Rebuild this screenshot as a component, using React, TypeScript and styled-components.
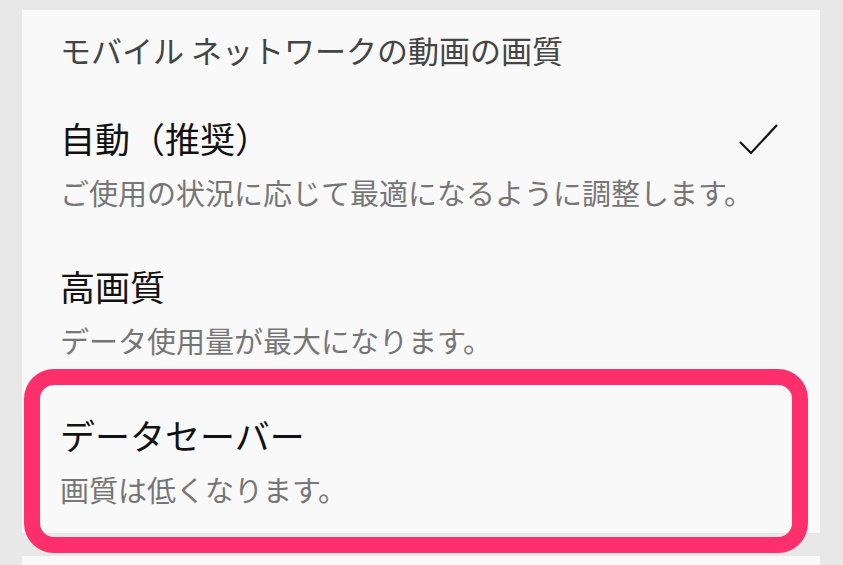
import styled, { createGlobalStyle } from 'styled-components';

const GlobalStyle = createGlobalStyle`
  html, body {
    margin: 0;
    padding: 0;
    background: #e8e8e8;
  }
  body {
    font-family: "Noto Sans CJK JP", "Noto Sans", sans-serif;
  }
`;

interface QualityOption {
  title: string;
  description: string;
  selected?: boolean;
  highlighted?: boolean;
}

const options: QualityOption[] = [
  { title: '自動（推奨）', description: 'ご使用の状況に応じて最適になるように調整します。', selected: true },
  { title: '高画質', description: 'データ使用量が最大になります。' },
  { title: 'データセーバー', description: '画質は低くなります。', highlighted: true },
];

export default function App() {
  return (
    <StyledPage>
      <GlobalStyle />
      <StyledPanel>
        <StyledHeader>モバイル ネットワークの動画の画質</StyledHeader>
        {options.map((option) => (
          <StyledOption key={option.title}>
            <StyledTitleRow>
              <StyledTitle>{option.title}</StyledTitle>
              {option.selected && <CheckIcon />}
            </StyledTitleRow>
            <StyledDescription>{option.description}</StyledDescription>
            {option.highlighted && <StyledHighlight />}
          </StyledOption>
        ))}
      </StyledPanel>
      <StyledNextPanel />
    </StyledPage>
  );
}

const CheckIcon = () => (
  <StyledCheck width="40" height="31" viewBox="0 0 40 31">
    <path d="M1 18 L12 29 L38 1" fill="none" stroke="#111" strokeWidth="2.2" />
  </StyledCheck>
);

const StyledPage = styled.div`
  height: 565px;
  overflow: hidden;
  padding: 10px 23px 0 22px;
  box-sizing: border-box;
  background: #e8e8e8;
`;

const StyledPanel = styled.div`
  background: #f9f9f9;
  height: 523px;
  padding: 19.5px 41px 0 38px;
  box-sizing: border-box;
`;

const StyledHeader = styled.div`
  font-size: 31px;
  line-height: 40px;
  color: #444;
  margin-bottom: 19px;
  white-space: nowrap;
`;

const StyledOption = styled.div`
  position: relative;
  padding: 25px 0 25.5px;
`;

const StyledTitleRow = styled.div`
  display: flex;
  justify-content: space-between;
  align-items: center;
  height: 48px;
`;

const StyledTitle = styled.div`
  font-size: 35px;
  line-height: 48px;
  color: #111;
  white-space: nowrap;
`;

const StyledCheck = styled.svg`
  display: block;
  margin-top: 3px;
`;

const StyledDescription = styled.div`
  font-size: 29px;
  line-height: 40px;
  margin-top: 10px;
  color: #767676;
  white-space: nowrap;
`;

const StyledHighlight = styled.div`
  position: absolute;
  top: -16.5px;
  bottom: -19px;
  left: -36px;
  right: -29px;
  border: 16px solid #fe2f6a;
  border-radius: 30px;
  pointer-events: none;
`;

const StyledNextPanel = styled.div`
  background: #f9f9f9;
  height: 40px;
  margin-top: 23px;
`;
